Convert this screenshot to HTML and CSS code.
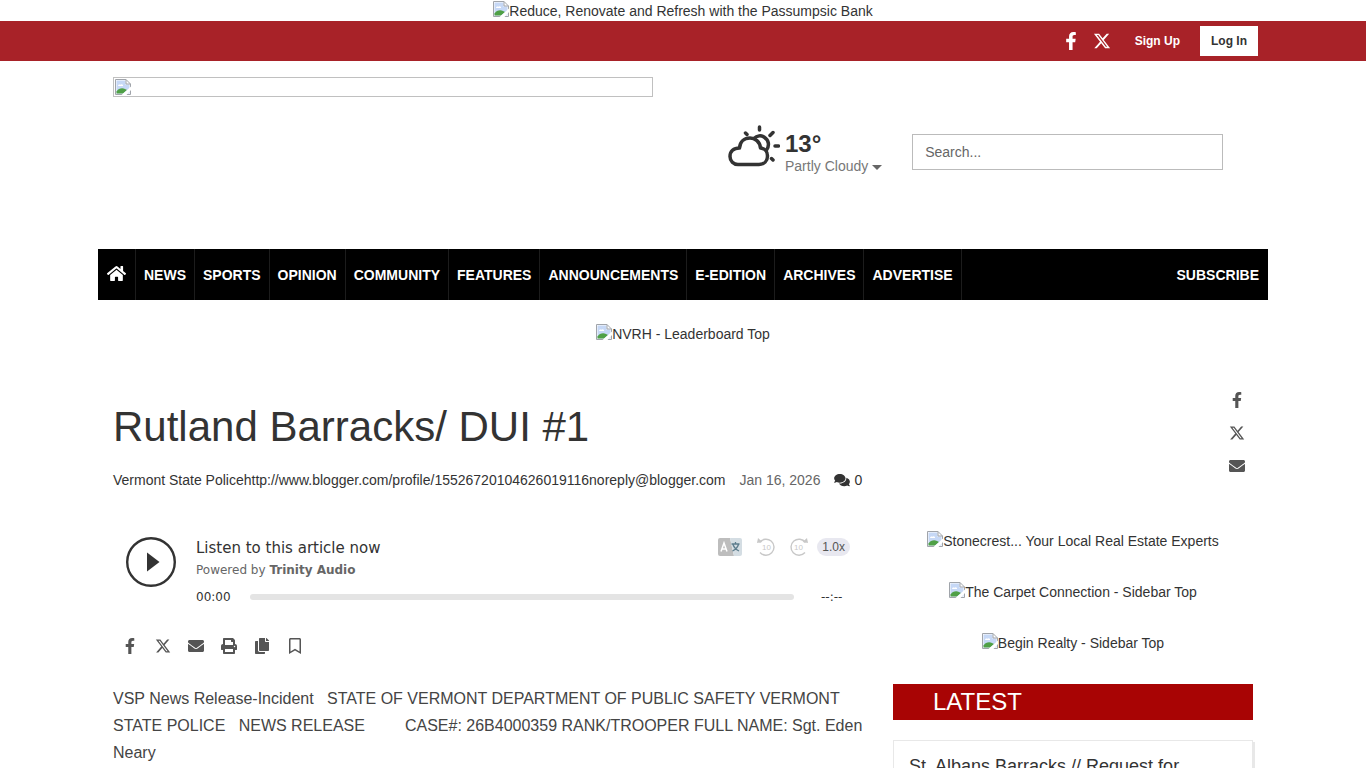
FILE: index.html
```html
<!DOCTYPE html>
<html lang="en">
<head>
<meta charset="utf-8">
<meta name="viewport" content="width=device-width, initial-scale=1">
<title>Rutland Barracks/ DUI #1</title>
<link rel="stylesheet" href="styles.css">
</head>
<body>
<svg class="sprite" aria-hidden="true">
  <symbol id="facebook" viewBox="0 0 320 512"><path d="M279.14 288l14.22-92.66h-88.91v-60.13c0-25.35 12.42-50.06 52.24-50.06h40.42V6.26S260.43 0 225.36 0c-73.22 0-121.08 44.38-121.08 124.72v70.62H22.89V288h81.39v224h100.17V288z"/></symbol>
  <symbol id="x" viewBox="0 0 512 512"><path d="M389.2 48h70.6L305.6 224.2 487 464H345L233.7 318.6 106.5 464H35.8L200.7 275.5 26.8 48H172.4L272.9 180.9 389.2 48zM364.4 421.8h39.1L151.1 88h-42L364.4 421.8z"/></symbol>
  <symbol id="mail" viewBox="0 0 512 512"><path d="M502.3 190.8c3.9-3.1 9.7-.2 9.7 4.7V400c0 26.5-21.5 48-48 48H48c-26.5 0-48-21.5-48-48V195.6c0-5 5.7-7.8 9.7-4.7 22.4 17.4 52.1 39.5 154.1 113.6 21.1 15.4 56.7 47.8 92.2 47.6 35.7.3 72-32.8 92.3-47.6 102-74.1 131.6-96.3 154-113.7zM256 320c23.2.4 56.6-29.2 73.4-41.4 132.7-96.3 142.8-104.7 173.4-128.7 5.8-4.5 9.2-11.5 9.2-18.9v-19c0-26.5-21.5-48-48-48H48c-26.5 0-48 21.5-48 48v19c0 7.4 3.4 14.3 9.2 18.9 30.6 23.9 40.7 32.4 173.4 128.7 16.8 12.2 50.2 41.8 73.4 41.4z"/></symbol>
  <symbol id="print" viewBox="0 0 512 512"><path d="M448 192V77.25c0-8.49-3.37-16.62-9.37-22.63L393.37 9.37c-6-6-14.14-9.37-22.63-9.37H96C78.33 0 64 14.33 64 32v160c-35.35 0-64 28.65-64 64v112c0 8.84 7.16 16 16 16h48v96c0 17.67 14.33 32 32 32h320c17.67 0 32-14.33 32-32v-96h48c8.84 0 16-7.16 16-16V256c0-35.35-28.65-64-64-64zm-64 256H128v-96h256v96zm0-224H128V64h192v48c0 8.84 7.16 16 16 16h48v96zm48 72c-13.25 0-24-10.75-24-24 0-13.26 10.75-24 24-24s24 10.74 24 24c0 13.25-10.75 24-24 24z"/></symbol>
  <symbol id="copy" viewBox="0 0 448 512"><path d="M320 448v40c0 13.255-10.745 24-24 24H24c-13.255 0-24-10.745-24-24V120c0-13.255 10.745-24 24-24h72v296c0 30.879 25.121 56 56 56h168zm0-344V0H152c-13.255 0-24 10.745-24 24v368c0 13.255 10.745 24 24 24h272c13.255 0 24-10.745 24-24V128H344c-13.2 0-24-10.8-24-24zm120.971-31.029L375.029 7.029A24 24 0 0 0 358.059 0H352v96h96v-6.059a24 24 0 0 0-7.029-16.97z"/></symbol>
  <symbol id="bookmark" viewBox="0 0 384 512"><path d="M336 0H48C21.49 0 0 21.49 0 48v464l192-112 192 112V48c0-26.51-21.49-48-48-48zm0 428.43l-144-84-144 84V54a6 6 0 0 1 6-6h276c3.314 0 6 2.683 6 5.996V428.43z"/></symbol>
  <symbol id="home" viewBox="0 0 576 512"><path d="M280.37 148.26L96 300.11V464a16 16 0 0 0 16 16l112.06-.29a16 16 0 0 0 15.92-16V368a16 16 0 0 1 16-16h64a16 16 0 0 1 16 16v95.64a16 16 0 0 0 16 16.05L464 480a16 16 0 0 0 16-16V300L295.67 148.26a12.19 12.19 0 0 0-15.3 0zM571.6 251.47L488 182.56V44.05a12 12 0 0 0-12-12h-56a12 12 0 0 0-12 12v72.61L318.47 43a48 48 0 0 0-61 0L4.34 251.47a12 12 0 0 0-1.6 16.9l25.5 31A12 12 0 0 0 45.15 301l235.22-193.74a12.19 12.19 0 0 1 15.3 0L530.9 301a12 12 0 0 0 16.9-1.6l25.5-31a12 12 0 0 0-1.7-16.93z"/></symbol>
  <symbol id="comments" viewBox="0 0 576 512"><path d="M416 192c0-88.4-93.1-160-208-160S0 103.6 0 192c0 34.3 14.1 65.9 38 92-13.4 30.2-35.5 54.2-35.8 54.5-2.2 2.3-2.8 5.7-1.5 8.7S4.8 352 8 352c36.6 0 66.9-12.3 88.7-25 32.2 15.7 70.3 25 111.3 25 114.9 0 208-71.6 208-160zm122 220c23.9-26 38-57.7 38-92 0-66.9-53.5-124.2-129.3-148.1.9 6.6 1.3 13.3 1.3 20.1 0 105.9-107.7 192-240 192-10.8 0-21.3-.8-31.7-1.9C207.8 439.6 281.8 480 368 480c41 0 79.1-9.2 111.3-25 21.8 12.7 52.1 25 88.7 25 3.2 0 6.1-1.9 7.3-4.8 1.3-2.9.7-6.3-1.5-8.7-.3-.2-22.4-24.2-35.8-54.5z"/></symbol>
  <symbol id="picture" viewBox="0 0 16 16">
    <path d="M.5.500h10.500l4.500 4.500v10.500H.5z" fill="#fff" stroke="#a0a4aa"/>
    <path d="M1.500 1.500h9v4h4v9h-13z" fill="#c6d8f6"/>
    <path d="M3 7c0-1.500 1.500-2 2.500-1.200C6.500 4.500 8.500 5.500 8 7z" fill="#fff"/>
    <path d="M1.500 14.500v-2c2-3 5.500-4 8.500-2.500l2 1-4 3.500z" fill="#4fa046"/>
    <path d="M11 .500v4.500h4.500" fill="none" stroke="#a0a4aa"/>
    <path d="M6.500 16l9.500-8.500v3.500L11.500 16z" fill="#fff"/>
  </symbol>
</svg>

<div class="top-ad"><a class="ad" href="#"><svg class="pic"><use href="#picture"/></svg>Reduce, Renovate and Refresh with the Passumpsic Bank</a></div>

<div class="topbar">
  <div class="container topbar-row">
    <a class="social" href="#" aria-label="Facebook"><svg><use href="#facebook"/></svg></a>
    <a class="social" href="#" aria-label="X"><svg><use href="#x"/></svg></a>
    <a class="signup" href="#">Sign Up</a>
    <a class="login" href="#">Log In</a>
  </div>
</div>

<header class="container masthead">
  <a class="logo" href="#" aria-label="Home page"><svg class="pic"><use href="#picture"/></svg></a>
  <div class="weather">
    <svg class="weather-icon" viewBox="0 0 52 42" aria-hidden="true">
      <g fill="none" stroke="#333" stroke-width="3.500" stroke-linecap="round" stroke-linejoin="round">
        <path d="M10 39.500h21c5 0 8.500-3.500 8.500-8.500 0-4.500-3-7.500-7-8-.5-6.500-5.500-10-10.500-10-5.500 0-10 3.500-10.500 10-6 0-9.500 3.500-9.500 8.500 0 4.500 3.500 8 8 8z"/>
        <path d="M26 13.500c3-3 7-3.500 10-1.500 4.500 3 6 8 2.500 13"/>
        <path d="M31.500 2v3M17.500 8l1.500 1.500M45 7.500l-3 3M47 21h3.500M43.500 33.500l1.500 1.500"/>
      </g>
    </svg>
    <div>
      <div class="temp">13°</div>
      <a class="sky" href="#">Partly Cloudy <span class="caret"></span></a>
    </div>
  </div>
  <form class="search"><input type="search" aria-label="Search" placeholder="Search..."></form>
</header>

<nav class="container nav">
  <a class="home" href="#" aria-label="Home"><svg><use href="#home"/></svg></a>
  <a href="#">NEWS</a>
  <a href="#">SPORTS</a>
  <a href="#">OPINION</a>
  <a href="#">COMMUNITY</a>
  <a href="#">FEATURES</a>
  <a href="#">ANNOUNCEMENTS</a>
  <a href="#">E-EDITION</a>
  <a href="#">ARCHIVES</a>
  <a href="#">ADVERTISE</a>
  <a class="subscribe" href="#">SUBSCRIBE</a>
</nav>

<div class="container leaderboard"><a class="ad" href="#"><svg class="pic"><use href="#picture"/></svg>NVRH - Leaderboard Top</a></div>

<main class="container">
  <div class="story-head">
    <div>
      <h1>Rutland Barracks/ DUI #1</h1>
      <div class="meta">
        <span>Vermont State Policehttp://www.blogger.com/profile/15526720104626019116noreply@blogger.com</span>
        <time datetime="2026-01-16">Jan 16, 2026</time>
        <a class="comments" href="#"><svg><use href="#comments"/></svg>0</a>
      </div>
    </div>
    <div class="share-side">
      <a href="#" aria-label="Facebook"><svg><use href="#facebook"/></svg></a>
      <a href="#" aria-label="X"><svg><use href="#x"/></svg></a>
      <a href="#" aria-label="Email"><svg><use href="#mail"/></svg></a>
    </div>
  </div>

  <div class="columns">
    <article class="story">
      <section class="player">
        <button class="play" type="button" aria-label="Play"><svg viewBox="0 0 50 50"><circle cx="25" cy="25" r="23.800" fill="none" stroke="#333" stroke-width="2.400"/><path d="M21 15.500l12.500 9.500L21 34.500z" fill="#333"/></svg></button>
        <div class="player-body">
          <div class="player-top">
            <div>
              <div class="listen">Listen to this article now</div>
              <div class="powered">Powered by <a href="#">Trinity Audio</a></div>
            </div>
            <div class="player-tools">
              <button type="button" aria-label="Translate"><svg class="translate" viewBox="0 0 24 18">
                <path d="M2 0h10l4 18H2q-2 0-2-2V2q0-2 2-2z" fill="#bdbdbd"/><path d="M12 0h10q2 0 2 2v14q0 2-2 2h-6z" fill="#d4dde3"/>
                <path d="M3 13.500L6 5l3 8.500M4 11h4" fill="none" stroke="#fff" stroke-width="1.500"/><path d="M13.500 6h8M17.500 4v2M15 6.500c1 3 3 5 6 6.500M20.500 6.500c-1 3-3 5-6 6.500" fill="none" stroke="#5d7d8d" stroke-width="1.300"/></svg></button>
              <button type="button" aria-label="Back 10 seconds"><svg viewBox="0 0 18 18"><path d="M2.500 4.500A8 8 0 1 1 3 14.500" fill="none" stroke="#c8c8c8" stroke-width="1.400"/><path d="M0 5l1-5 4.500 4z" fill="#c8c8c8"/><text x="9.500" y="12" text-anchor="middle">10</text></svg></button>
              <button type="button" aria-label="Forward 10 seconds"><svg viewBox="0 0 18 18"><path d="M15.500 4.500A8 8 0 1 0 15 14.500" fill="none" stroke="#c8c8c8" stroke-width="1.400"/><path d="M18 5l-1-5-4.500 4z" fill="#c8c8c8"/><text x="8.500" y="12" text-anchor="middle">10</text></svg></button>
              <button class="speed" type="button">1.0x</button>
            </div>
          </div>
          <div class="timeline">
            <span class="time">00:00</span>
            <div class="track"></div>
            <span class="time total">--:--</span>
          </div>
        </div>
      </section>

      <div class="share-row">
        <a href="#" aria-label="Facebook"><svg><use href="#facebook"/></svg></a>
        <a href="#" aria-label="X"><svg><use href="#x"/></svg></a>
        <a href="#" aria-label="Email"><svg><use href="#mail"/></svg></a>
        <button type="button" aria-label="Print"><svg><use href="#print"/></svg></button>
        <button type="button" aria-label="Copy"><svg><use href="#copy"/></svg></button>
        <button type="button" aria-label="Save"><svg><use href="#bookmark"/></svg></button>
      </div>

      <p>VSP News Release-Incident&nbsp;&nbsp; STATE OF VERMONT DEPARTMENT OF PUBLIC SAFETY VERMONT STATE POLICE&nbsp;&nbsp; NEWS RELEASE&nbsp;&nbsp;&nbsp;&nbsp;&nbsp;&nbsp;&nbsp;&nbsp; CASE#: 26B4000359 RANK/TROOPER FULL NAME: Sgt. Eden Neary</p>
    </article>

    <aside class="sidebar">
      <a class="ad" href="#"><svg class="pic"><use href="#picture"/></svg>Stonecrest... Your Local Real Estate Experts</a>
      <a class="ad" href="#"><svg class="pic"><use href="#picture"/></svg>The Carpet Connection - Sidebar Top</a>
      <a class="ad" href="#"><svg class="pic"><use href="#picture"/></svg>Begin Realty - Sidebar Top</a>
      <h2>LATEST</h2>
      <div class="card"><h3><a href="#">St. Albans Barracks // Request for</a></h3></div>
    </aside>
  </div>
</main>
</body>
</html>
```

FILE: styles.css
```css
* { box-sizing: border-box; }

body {
  margin: 0;
  background: #fff;
  color: #333;
  font: 14px/20px "Liberation Sans", Arial, sans-serif;
}

a { color: inherit; text-decoration: none; }
h1, h2, h3, p { margin: 0; font-weight: 400; }
svg { display: block; fill: currentColor; }
button { padding: 0; border: 0; background: none; color: inherit; cursor: pointer; }
.sprite { position: absolute; width: 0; height: 0; }

.container {
  max-width: 1170px;
  margin: 0 auto;
  padding: 0 15px;
}

.ad { display: inline-flex; justify-content: center; }
.pic { width: 16px; height: 16px; flex: none; }
.top-ad { display: flex; justify-content: center; padding-top: 1px; }

/* Account bar */
.topbar { background: #a82228; color: #fff; }
.topbar-row {
  display: flex;
  align-items: center;
  justify-content: flex-end;
  height: 40px;
  padding-right: 10px;
  font-size: 12px;
  font-weight: 700;
}
.social { width: 31px; }
.social svg { width: 18px; height: 18px; margin: 0 auto; }
.signup { padding: 0 20px 0 17px; }
.login { padding: 5px 11px; background: #fff; color: #333; }

/* Masthead */
.masthead {
  display: flex;
  align-items: flex-start;
  padding-top: 16px;
  padding-bottom: 73px;
}
.logo {
  flex: 0 1 540px;
  height: 20px;
  padding: 1px;
  border: 1px solid #c0c0c0;
}
.weather {
  display: flex;
  gap: 5px;
  margin: 48px 30px 0 75px;
  color: #777;
  white-space: nowrap;
}
.weather-icon { width: 52px; height: 42px; }
.temp {
  padding-top: 6px;
  color: #333;
  font-size: 24px;
  font-weight: 700;
  line-height: 25px;
}
.caret {
  display: inline-block;
  border: 5px solid transparent;
  border-top-color: #666;
  border-bottom: 0;
  vertical-align: middle;
}
.search { flex: 1; margin: 57px 30px 0 0; }
.search input {
  display: block;
  width: 100%;
  height: 36px;
  padding: 0 12px;
  border: 1px solid #bbb;
  border-radius: 0;
  background: #fff;
  color: #555;
  font: inherit;
  appearance: none;
}
.search input::placeholder { color: #666; opacity: 1; }

/* Main navigation */
.nav {
  display: flex;
  padding: 0;
  background: #000;
  color: #fff;
  font-weight: 700;
}
.nav a { padding: 16px 8px 15px; border-right: 1px solid #1c1c1c; }
.nav .home { padding: 16px 9px 0; }
.nav .home svg { width: 19px; height: 17px; }
.nav .subscribe { margin-left: auto; border-color: #000; }

.leaderboard { display: flex; justify-content: center; padding-top: 24px; }

/* Story heading */
.story-head {
  display: flex;
  justify-content: space-between;
  padding-top: 46px;
  color: #333;
}
h1 { padding-top: 12px; font-size: 42px; line-height: 50px; }
.meta { display: flex; gap: 14px; padding-top: 18px; }
.meta time { color: #666; }
.comments { display: flex; align-items: center; gap: 4px; }
.comments svg { width: 16px; height: 14px; }
.share-side { display: grid; gap: 17px; align-content: start; padding: 2px 8px 0; color: #555; }
.share-side svg, .share-row svg { width: 16px; height: 16px; }

.columns {
  display: grid;
  grid-template-columns: minmax(0, 25fr) minmax(0, 12fr);
  gap: 30px;
  padding-top: 41px;
}

/* Audio player */
.player {
  display: flex;
  gap: 20px;
  padding: 6px 13px 0;
  font-family: "DejaVu Sans", Verdana, sans-serif;
}
.play { width: 50px; height: 50px; }
.player-body { flex: 1; }
.player-top { display: flex; justify-content: space-between; }
.listen { padding-top: 1px; font-size: 15px; }
.powered { padding-top: 2px; color: #666; font-size: 12px; }
.powered a { font-weight: 700; }
.player-tools { display: flex; align-items: center; gap: 15px; height: 20px; }
.player-tools svg { width: 18px; height: 18px; }
.player-tools .translate { width: 24px; }
.player-tools text { fill: #c8c8c8; font: 8px "Liberation Sans", sans-serif; }
.speed {
  height: 18px;
  margin-left: -6px;
  padding: 0 5px;
  border-radius: 9px;
  background: #e8e8f0;
  color: #555;
  font: 12px/18px "Liberation Sans", sans-serif;
}
.timeline {
  display: flex;
  align-items: center;
  gap: 18px;
  padding: 7px 2px 0 0;
  font-size: 12px;
}
.time { flex: 0 0 36px; }
.track { flex: 1; height: 6px; border-radius: 3px; background: #e4e4e4; }
.total { padding-left: 9px; }

.share-row { display: flex; gap: 17px; padding: 31px 9px; color: #555; }
.story p { font-size: 16px; line-height: 27px; color: #444; }

/* Sidebar */
.sidebar { display: flex; flex-direction: column; }
.sidebar .ad { margin-bottom: 31px; }
.sidebar h2 {
  padding: 0 40px;
  background: #a80404;
  color: #fff;
  font-size: 24px;
  line-height: 36px;
}
.card {
  margin-top: 20px;
  padding: 13px 15px;
  border: 1px solid #e8e8e8;
  box-shadow: 2px 2px 0 #e8e8e8;
}
.card h3 { font-size: 18px; line-height: 24px; }
```
